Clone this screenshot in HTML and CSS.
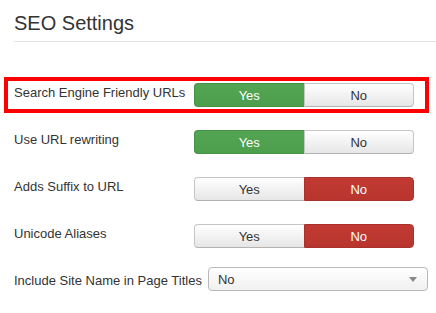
FILE: index.html
```html
<!DOCTYPE html>
<html lang="en">
<head>
    <meta charset="UTF-8">
    <title>SEO Settings</title>
    <link rel="stylesheet" href="styles.css">
</head>
<body>
    <div id="page-container">
        <h2 class="page-title">SEO Settings</h2>

        <div class="settings">
            <div class="field-row highlight">
                <label class="field-label">Search Engine Friendly URLs</label>
                <div class="toggle">
                    <button class="toggle-btn yes active">Yes</button>
                    <button class="toggle-btn no">No</button>
                </div>
            </div>

            <div class="field-row">
                <label class="field-label">Use URL rewriting</label>
                <div class="toggle">
                    <button class="toggle-btn yes active">Yes</button>
                    <button class="toggle-btn no">No</button>
                </div>
            </div>

            <div class="field-row">
                <label class="field-label">Adds Suffix to URL</label>
                <div class="toggle">
                    <button class="toggle-btn yes">Yes</button>
                    <button class="toggle-btn no active">No</button>
                </div>
            </div>

            <div class="field-row">
                <label class="field-label">Unicode Aliases</label>
                <div class="toggle">
                    <button class="toggle-btn yes">Yes</button>
                    <button class="toggle-btn no active">No</button>
                </div>
            </div>

            <div class="select-row">
                <label class="select-label">Include Site Name in Page Titles</label>
                <div class="select-box">
                    <span class="select-value">No</span>
                    <span class="select-arrow"></span>
                </div>
            </div>
        </div>
    </div>
</body>
</html>
```

FILE: styles.css
```css
body {
    margin: 0;
    font-family: 'Liberation Sans', Arial, sans-serif;
    color: #333333;
    background-color: #ffffff;
}
#page-container {
    padding-left: 14px;
}
.page-title {
    margin: 11px 0 0 0;
    padding-bottom: 6px;
    font-size: 20px;
    line-height: 24px;
    font-weight: normal;
    color: #333333;
    border-bottom: 1px solid #e5e5e5;
}
.settings {
    padding-top: 41px;
}
.field-row {
    display: flex;
    align-items: flex-start;
    width: fit-content;
    margin-bottom: 23px;
}
.field-row.highlight {
    border: 4px solid #ff0000;
    padding: 2px 11px 2px 6px;
    margin: -6px -15px 17px -10px;
}
.field-label {
    width: 180px;
    padding-top: 1px;
    font-size: 13px;
    line-height: 18px;
}
.toggle {
    display: flex;
    width: 220px;
    height: 24px;
}
.toggle-btn {
    flex: 1;
    margin: 0;
    padding: 0;
    height: 24px;
    font-family: inherit;
    font-size: 13px;
    color: #333333;
    border: 1px solid #c5c5c5;
    border-bottom-color: #b3b3b3;
    background: linear-gradient(#ffffff, #e6e6e6);
}
.toggle-btn.yes {
    border-radius: 4px 0 0 4px;
    border-right: none;
}
.toggle-btn.no {
    border-radius: 0 4px 4px 0;
}
.toggle-btn.yes.active {
    color: #ffffff;
    border-color: #449244;
    background: linear-gradient(#53a553, #4d9e4d);
}
.toggle-btn.no.active {
    color: #ffffff;
    border-color: #a8312b;
    background: linear-gradient(#c13a33, #b8352e);
}
.select-row {
    display: flex;
    align-items: center;
    margin-top: -4px;
}
.select-label {
    font-size: 13px;
    line-height: 18px;
    padding-top: 3px;
    margin-right: 6px;
}
.select-box {
    display: flex;
    align-items: center;
    justify-content: space-between;
    box-sizing: border-box;
    width: 220px;
    height: 24px;
    padding: 0 10px 0 9px;
    border: 1px solid #b8b8b8;
    border-radius: 4px;
    background: linear-gradient(#ffffff, #f0f0f0);
    font-size: 13px;
}
.select-arrow {
    width: 0;
    height: 0;
    border-left: 4px solid transparent;
    border-right: 4px solid transparent;
    border-top: 5px solid #888888;
}
```
